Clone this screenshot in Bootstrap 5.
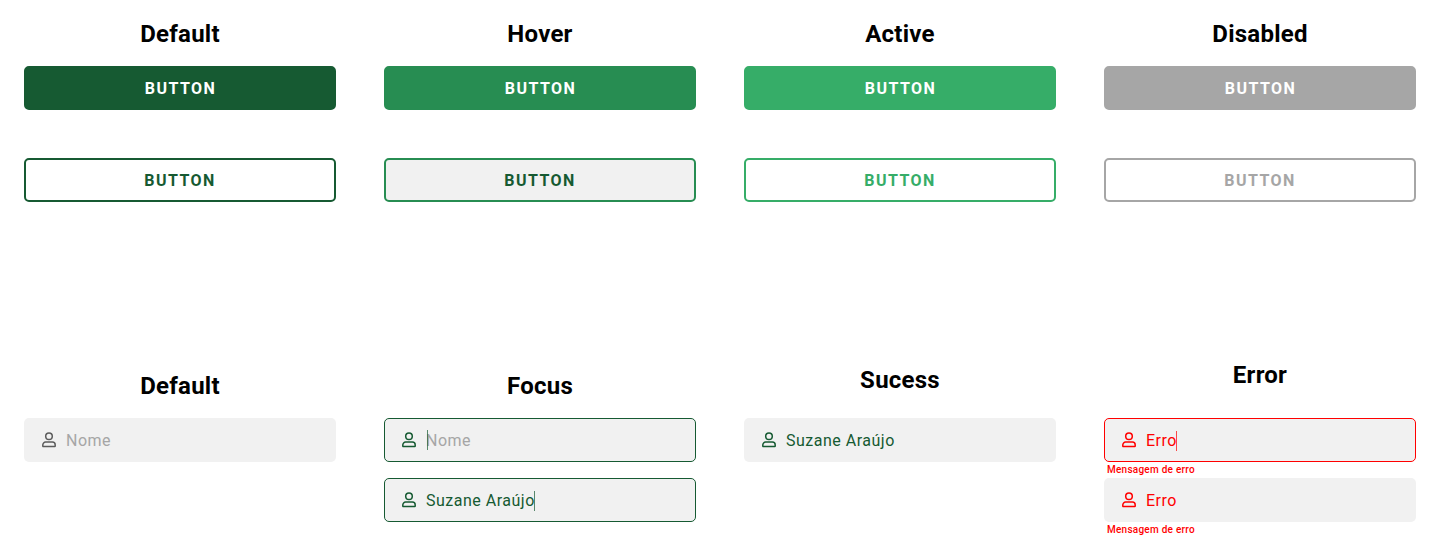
<!DOCTYPE html>
<html lang="pt-BR">
<head>
<meta charset="utf-8">
<meta name="viewport" content="width=device-width, initial-scale=1">
<title>Button and input states</title>
<link href="https://cdn.jsdelivr.net/npm/bootstrap@5.3.0/dist/css/bootstrap.min.css" rel="stylesheet">
<style>
  :root { --green-dark: #165a32; --green: #278d52; --green-light: #36ad68; --gray: #a6a6a6; --surface: #f1f1f1; --danger: #ff0000; }
  body { font-family: Roboto, sans-serif; color: #000; background: #fff; }
  .buttons-row { height: 352px; padding-top: 20px; }
  .state-title { font-size: 24px; line-height: 28px; font-weight: 700; letter-spacing: .24px; margin: 0 0 18px; text-align: center; }
  .title-area { height: 66px; padding-top: 20px; }
  .title-area.success { padding-top: 14px; }
  .title-area.error { padding-top: 9px; }
  .state-btn { height: 44px; padding: 2px 0 0 1px; border: 2px solid var(--c); border-radius: 5px; background: var(--c); color: #fff; font-size: 16px; line-height: 20px; font-weight: 700; letter-spacing: 1.44px; }
  .state-btn.outlined { background: #fff; color: var(--c); padding-left: 0; }
  .state-btn.outlined.hovered { background: var(--surface); color: var(--green-dark); }
  .state-btn:disabled { opacity: 1; border-color: var(--c); background: var(--c); color: #fff; }
  .state-btn.outlined:disabled { background: #fff; color: var(--c); }
  .c-dark { --c: var(--green-dark); } .c-mid { --c: var(--green); } .c-light { --c: var(--green-light); } .c-gray { --c: var(--gray); }
  .field { height: 44px; padding-left: 17px; border: 1px solid transparent; border-radius: 5px; background: var(--surface); color: var(--green-dark); font-size: 16px; letter-spacing: .5px; line-height: 20px; }
  .field.outline { border-color: currentColor; }
  .field.idle { color: #5c5c5c; }
  .field.invalid { color: var(--danger); }
  .field svg { width: 14px; height: 16px; margin-right: 10px; flex: none; }
  .entry { padding-top: 2px; }
  .hint { color: var(--gray); }
  .caret { width: 1px; height: 20px; background: currentColor; opacity: .7; margin-left: -1px; position: relative; top: 1px; }
  .caret.before { margin: 0 -2px 0 1px; top: 0; }
  .message { height: 16px; padding-left: 3px; font-size: 10px; line-height: 16px; font-weight: 500; letter-spacing: .25px; color: var(--danger); }
</style>
</head>
<body>
<svg class="d-none" xmlns="http://www.w3.org/2000/svg">
  <symbol id="user" viewBox="0 0 14 16">
    <g fill="none" stroke="currentColor" stroke-width="1.5" stroke-linejoin="round">
      <circle cx="7" cy="4.2" r="3.3"/>
      <path d="M3.6 10.1H10.4A2.8 2.8 0 0 1 13.2 12.9V14Q13.2 14.5 12.7 14.5H1.3Q.8 14.5 .8 14V12.9A2.8 2.8 0 0 1 3.6 10.1Z"/>
    </g>
  </symbol>
</svg>
<main class="container-fluid p-0">
  <section class="row g-0 buttons-row">
    <div class="col-3 px-4">
      <h2 class="state-title">Default</h2>
      <button class="btn state-btn c-dark w-100 d-block mb-5">BUTTON</button>
      <button class="btn state-btn outlined c-dark w-100 d-block">BUTTON</button>
    </div>
    <div class="col-3 px-4">
      <h2 class="state-title">Hover</h2>
      <button class="btn state-btn c-mid w-100 d-block mb-5">BUTTON</button>
      <button class="btn state-btn outlined hovered c-mid w-100 d-block">BUTTON</button>
    </div>
    <div class="col-3 px-4">
      <h2 class="state-title">Active</h2>
      <button class="btn state-btn c-light w-100 d-block mb-5">BUTTON</button>
      <button class="btn state-btn outlined c-light w-100 d-block">BUTTON</button>
    </div>
    <div class="col-3 px-4">
      <h2 class="state-title">Disabled</h2>
      <button class="btn state-btn c-gray w-100 d-block mb-5" disabled>BUTTON</button>
      <button class="btn state-btn outlined c-gray w-100 d-block" disabled>BUTTON</button>
    </div>
  </section>
  <section class="row g-0">
    <div class="col-3 px-4">
      <div class="title-area"><h2 class="state-title">Default</h2></div>
      <div class="field idle d-flex align-items-center"><svg><use href="#user"/></svg><span class="entry hint">Nome</span></div>
    </div>
    <div class="col-3 px-4">
      <div class="title-area"><h2 class="state-title">Focus</h2></div>
      <div class="field outline d-flex align-items-center mb-3"><svg><use href="#user"/></svg><span class="caret before"></span><span class="entry hint">Nome</span></div>
      <div class="field outline d-flex align-items-center"><svg><use href="#user"/></svg><span class="entry">Suzane Araújo</span><span class="caret"></span></div>
    </div>
    <div class="col-3 px-4">
      <div class="title-area success"><h2 class="state-title">Sucess</h2></div>
      <div class="field d-flex align-items-center"><svg><use href="#user"/></svg><span class="entry">Suzane Araújo</span></div>
    </div>
    <div class="col-3 px-4">
      <div class="title-area error"><h2 class="state-title">Error</h2></div>
      <div class="field outline invalid d-flex align-items-center"><svg><use href="#user"/></svg><span class="entry">Erro</span><span class="caret"></span></div>
      <div class="message">Mensagem de erro</div>
      <div class="field invalid d-flex align-items-center"><svg><use href="#user"/></svg><span class="entry">Erro</span></div>
      <div class="message">Mensagem de erro</div>
    </div>
  </section>
</main>
<script src="https://cdn.jsdelivr.net/npm/bootstrap@5.3.0/dist/js/bootstrap.bundle.min.js"></script>
</body>
</html>
